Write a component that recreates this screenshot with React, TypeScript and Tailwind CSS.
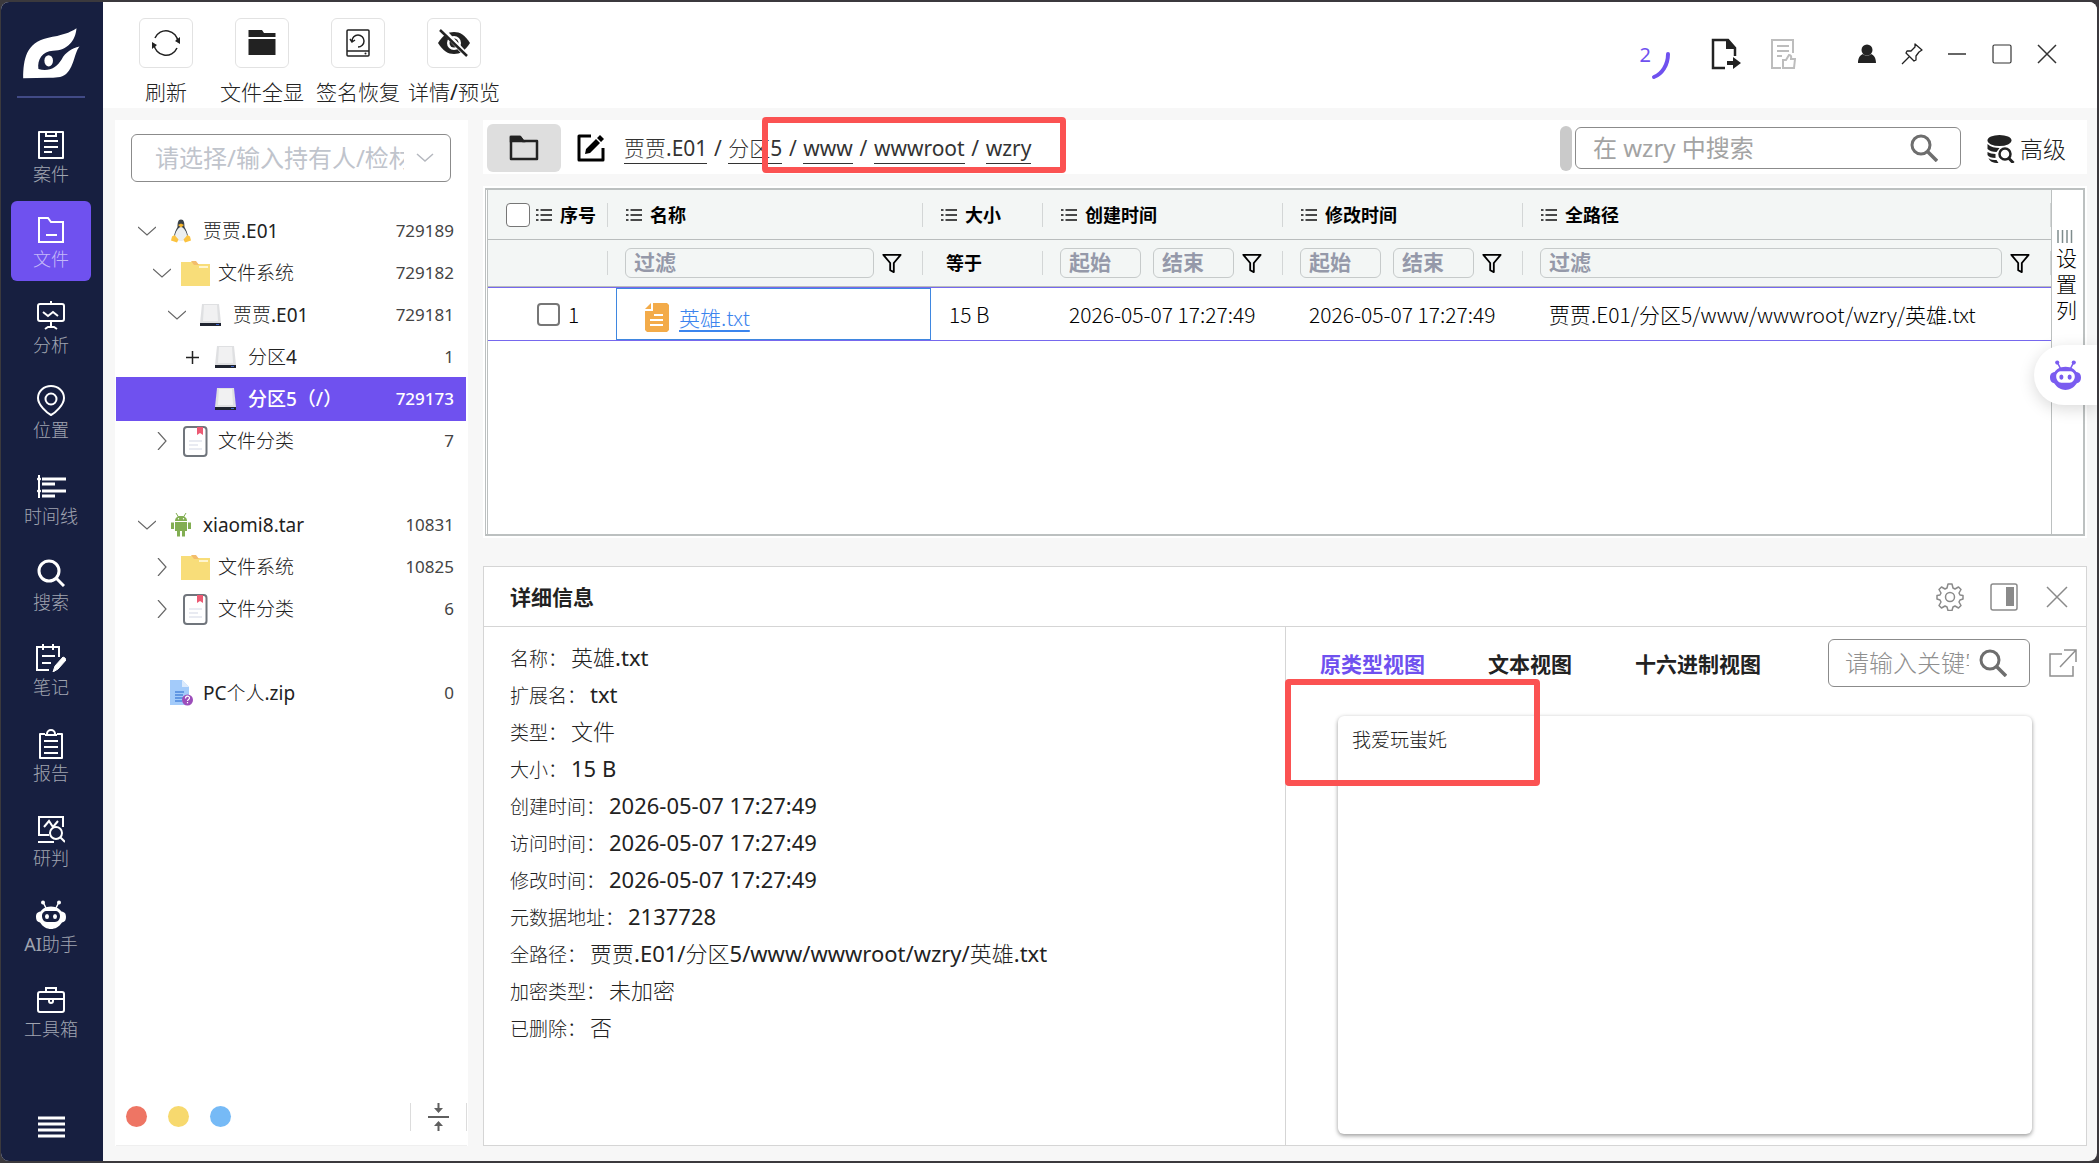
import { useState, type ReactNode } from 'react';
import clsx from 'clsx';

type IconProps = { className?: string };

const stroke = { fill: 'none', stroke: 'currentColor', strokeWidth: 2 } as const;

/* ---------- sidebar icons ---------- */

const LogoIcon = () => (
  <svg viewBox="66 80 180 160" className="w-[60px] h-[53px] text-white" fill="currentColor">
    <path d="M72 235C72 175 82 128 145 113C190 105 212 98 233 84C230 122 206 151 162 152C130 154 114 178 118 207C150 216 172 203 188 178C200 156 218 145 242 139C224 160 226 214 190 229C178 234 165 233 150 233Z" />
    <ellipse cx="149" cy="182" rx="13" ry="17" />
  </svg>
);

const CaseIcon = () => (
  <svg viewBox="0 0 28 30" className="w-7 h-[30px]" {...stroke}>
    <path d="M9 2H2v26h24V2h-7" strokeLinejoin="round" />
    <path d="M9 1v5h10V1M2 2h24M7 11h14M7 17h14M7 22h8" />
  </svg>
);

const FileNavIcon = () => (
  <svg viewBox="0 0 28 30" className="w-7 h-[30px]" {...stroke}>
    <path d="M2 3h9l3 4h12v20H2zM9 20h11" />
  </svg>
);

const AnalysisIcon = () => (
  <svg viewBox="0 0 30 30" className="w-[30px] h-[30px]" {...stroke}>
    <rect x="2" y="3" width="26" height="17" rx="2" />
    <path d="M15 0v3M7 11l5 4 5-4 5 4M15 20v6M9 28l3-2h6l3 2" />
  </svg>
);

const LocationIcon = () => (
  <svg viewBox="0 0 30 32" className="w-[30px] h-8" {...stroke}>
    <path d="M15 30C11 28 2 20 2 13a13 12 0 0 1 26 0c0 7-9 15-13 17z" />
    <circle cx="15" cy="14" r="5.500" />
  </svg>
);

const TimelineIcon = () => (
  <svg viewBox="0 0 30 26" className="w-[30px] h-[26px]" fill="none" stroke="currentColor" strokeWidth="3">
    <path d="M3 1v23" strokeWidth="2" />
    <path d="M6 5h24M6 10h13M6 17h24M6 22h13" />
    <circle cx="3" cy="5" r="1.500" fill="currentColor" strokeWidth="1" />
    <circle cx="3" cy="17" r="1.500" fill="currentColor" strokeWidth="1" />
  </svg>
);

const SearchNavIcon = () => (
  <svg viewBox="0 0 28 28" className="w-7 h-7" fill="none" stroke="currentColor" strokeWidth="3">
    <circle cx="12" cy="12" r="10" />
    <path d="M19 19l8 8" />
  </svg>
);

const NoteIcon = () => (
  <svg viewBox="0 0 30 28" className="w-[30px] h-7" {...stroke}>
    <path d="M13 26H1V3h22v10M7 0v6M17 0v6M6 12h13M6 19h9" />
    <path d="M29 14l-2-1-8 9-2 6 5-3 8-9z" fill="currentColor" strokeWidth="1" />
  </svg>
);

const ReportIcon = () => (
  <svg viewBox="0 0 28 30" className="w-7 h-[30px]" {...stroke}>
    <path d="M8 5H3v24h22V5h-5" strokeLinejoin="round" />
    <path d="M8 6h12M10 5a4 4 0 0 1 8 0M7 12h14M7 18h14M7 24h14" />
  </svg>
);

const JudgeIcon = () => (
  <svg viewBox="0 0 28 28" className="w-7 h-7" {...stroke}>
    <path d="M12 20H2V2h24v10M7 12l5-6 4 6 5-6M1 27h16" />
    <circle cx="19" cy="18" r="6" fill="#171f40" />
    <path d="M23 22l5 5" />
  </svg>
);

const RobotIcon = ({ className }: IconProps) => (
  <svg viewBox="0 0 30 30" className={className}>
    <path d="M7 2l3 6M23 2l-3 6" stroke="currentColor" strokeWidth="1.500" fill="none" />
    <circle cx="7" cy="2.500" r="2" fill="currentColor" />
    <circle cx="23" cy="2.500" r="2" fill="currentColor" />
    <path
      fill="currentColor"
      fillRule="evenodd"
      d="M15 6.500c6 0 9 3 10.500 5C29 12 30 14 30 17s-1 5-4 5.500C23 27 19 29 15 29S7 27 4 22.500C1 22 0 20 0 17s1-5 4.500-5.500C6 9.500 9 6.500 15 6.500zM11 11c-3 0-5 2-5 5s2 6 5 6h8c3 0 5-3 5-6s-2-5-5-5z"
    />
    <ellipse cx="11" cy="16.500" rx="2" ry="2.500" fill="currentColor" />
    <ellipse cx="19" cy="16.500" rx="2" ry="2.500" fill="currentColor" />
  </svg>
);

const ToolboxIcon = () => (
  <svg viewBox="0 0 28 28" className="w-7 h-7" {...stroke}>
    <rect x="1" y="6" width="26" height="20" rx="2" />
    <path d="M9 6V2h10v4M1 13h26M12 13v2a2 2 0 0 0 4 0v-2" />
  </svg>
);

/* ---------- toolbar icons ---------- */

const RefreshIcon = () => (
  <svg viewBox="0 0 28 28" className="w-7 h-7" fill="none" stroke="#222" strokeWidth="1.500">
    <path d="M3 9a12 12 0 0 1 23 4M25 19a12 12 0 0 1-23-4" />
    <path d="M28 8v7l-5-3zM0 20v-7l5 3z" fill="#222" stroke="none" />
  </svg>
);

const FolderSolidIcon = () => (
  <svg viewBox="0 0 28 26" className="w-7 h-[26px]" fill="#222">
    <path d="M.5 0H14l2 3h11.500v4H.5zM.5 9h27v16H.5z" />
  </svg>
);

const RestoreDiskIcon = () => (
  <svg viewBox="0 0 24 28" className="w-6 h-7" fill="none" stroke="#222" strokeWidth="1.500">
    <rect x="1" y="1" width="22" height="26" rx="1" />
    <path d="M1 22h22M6 12a6 6 0 1 1 6 6M4 10l2 3 3-2" />
    <circle cx="19.500" cy="24.500" r="1" fill="#222" stroke="none" />
  </svg>
);

const EyeOffIcon = () => (
  <svg viewBox="0 0 34 28" className="w-[34px] h-7">
    <path d="M1 14C6 6 11 3 17 3s11 3 16 11c-5 8-10 11-16 11S6 22 1 14z" fill="#222" />
    <circle cx="17" cy="14" r="7" fill="#fff" />
    <circle cx="17" cy="14" r="4.500" fill="#222" />
    <path d="M5 0l25 27" stroke="#fff" strokeWidth="5" />
    <path d="M3 1l27 26" stroke="#222" strokeWidth="2.500" />
  </svg>
);

const ExportIcon = () => (
  <svg viewBox="0 0 30 32" className="w-[30px] h-8">
    <path d="M14 30H2V2h15l7 8v8" fill="none" stroke="#222" strokeWidth="2.500" />
    <path d="M15 1l10 10H15zM16 23h6v-4l8 6-8 6v-4h-6z" fill="#222" />
  </svg>
);

const ApproveIcon = () => (
  <svg viewBox="0 0 26 32" className="w-[26px] h-8" fill="none" stroke="#bdbdbd" strokeWidth="2">
    <path d="M11 30H2V2h21v13M7 8h12M7 13h12M7 18h5" />
    <path d="M13 22h3l3-5c3 0 2 3 2 4h4l-1 9H13z" />
  </svg>
);

const FunnelIcon = () => (
  <svg viewBox="0 0 22 22" className="w-5 h-5" fill="none" stroke="#000" strokeWidth="2">
    <path d="M1.500 2h19L13 11v10l-4-2v-8z" strokeLinejoin="round" />
  </svg>
);

const ListIcon = () => (
  <svg viewBox="0 0 16 14" className="w-4 h-[14px] shrink-0" stroke="#111" strokeWidth="1.500">
    <path d="M0 2h2.500M4.500 2H16M0 7h2.500M4.500 7H16M0 12h2.500M4.500 12H16" />
  </svg>
);

const MagnifierIcon = () => (
  <svg viewBox="0 0 28 28" className="w-7 h-7" fill="none" stroke="#6e6e6e" strokeWidth="3">
    <circle cx="11" cy="11" r="9" />
    <path d="M17 17l10 10" strokeWidth="3.500" />
  </svg>
);

const DatabaseSearchIcon = () => (
  <svg viewBox="0 0 27 28" className="w-7 h-7" fill="#222">
    <ellipse cx="12" cy="5.500" rx="12" ry="5.500" />
    <path d="M0 9c3 3 8 4 12 4l-3 4C5 17 2 16 0 14zM0 17c2 1 5 2 8 2v4c-4 0-7-1-8-3zM1 23c2 2 5 2 8 2l2 3c-6 0-9-2-10-5z" />
    <circle cx="17.500" cy="19" r="5.500" fill="#fff" stroke="#222" strokeWidth="2.500" />
    <path d="M21 23l5 5" stroke="#222" strokeWidth="3" />
  </svg>
);

/* ---------- tree icons ---------- */

const Chevron = ({ open }: { open: boolean }) => (
  <svg viewBox="0 0 18 18" className="w-[18px] h-[18px]" fill="none" stroke="#666" strokeWidth="1.200">
    <path d={open ? 'M0 5l9 8 9-8' : 'M5 0l8 9-8 9'} />
  </svg>
);

const LinuxIcon = () => (
  <svg viewBox="0 0 20 24" className="w-5 h-6">
    <path d="M10 0.500C7 .5 6.500 4 6.500 8 5 11 3 14 3 19c4 3 10 3 14 0 0-5-2-8-3.500-11C13.500 4 13 .5 10 .5z" fill="#3b4248" />
    <path d="M10 8c-3 0-6 6-6 9s3 5 6 5 6-2 6-5-3-9-6-9z" fill="#eceff1" />
    <path d="M7 6l3 2.500L13 6l-3-1.500z" fill="#f6b62c" />
    <path d="M3.500 16l4 4.500-1.500 3-6-2 1-4zM16.500 16l-4 4.500 1.500 3 6-2-1-4z" fill="#fbc340" />
  </svg>
);

const AndroidIcon = () => (
  <svg viewBox="0 0 20 24" className="w-5 h-6" fill="#82ae52">
    <path d="M4 8C4 5 6 3 10 3s6 2 6 5z" />
    <path d="M5 0l2.500 4M15 0l-2.500 4" stroke="#82ae52" />
    <path d="M4 9h12v9H4zM0 9.500h3V16H0zM17 9.500h3V16h-3zM6 18h3v5.500H6zM11 18h3v5.500h-3z" />
    <circle cx="7.500" cy="5.800" r=".7" fill="#fff" />
    <circle cx="12.500" cy="5.800" r=".7" fill="#fff" />
  </svg>
);

const FolderIcon = () => (
  <svg viewBox="0 0 29 25" className="w-[29px] h-[25px]">
    <path d="M0 1h14l3 2h12v22H0z" fill="#f8dd79" />
    <path d="M10 0h5l3 4h-5z" fill="#f3bd6c" />
    <path d="M18 6h9" stroke="#fff5cf" strokeWidth="2" />
  </svg>
);

const DiskIcon = () => (
  <svg viewBox="0 0 21 24" className="w-[21px] h-6">
    <path d="M2 1h17l2 19H0z" fill="#dfe0e2" />
    <path d="M4 2h13l1 16H3z" fill="#f1f1f2" />
    <path d="M0 20h21v3H0z" fill="#1f2430" />
    <path d="M16 21.500h3" stroke="#3f64c8" />
  </svg>
);

const CategoryIcon = () => (
  <svg viewBox="0 0 25 31" className="w-[25px] h-[31px]">
    <rect x="1" y="1" width="22.500" height="29" rx="3" fill="#fff" stroke="#70757c" strokeWidth="2" />
    <path d="M14 1h6v8l-3-2-3 2z" fill="#ec5a73" />
    <path d="M6 15h13M6 19h9M6 23h13" stroke="#e2e5ee" strokeWidth="1.500" />
  </svg>
);

const UnknownFileIcon = () => (
  <svg viewBox="0 0 24 26" className="w-6 h-[26px]">
    <path d="M1 0h12l7 7v18H1z" fill="#a3cbfa" />
    <path d="M13 0l7 7h-7z" fill="#dcebfd" />
    <path d="M6 12h9M6 15h8M6 18h9M6 21h7" stroke="#4c86dc" strokeWidth="1.500" />
    <circle cx="18.500" cy="20" r="5.500" fill="#9c4dba" />
    <path d="M16.500 18.500c0-3 4-3 4-.5 0 1.500-2 1.500-2 3M18.500 22v1.200" stroke="#fff" fill="none" strokeWidth="1.200" />
  </svg>
);

const TxtIcon = () => (
  <svg viewBox="0 0 24 29" className="w-6 h-[29px] shrink-0">
    <path d="M8 0h14l2 2v25l-2 2H2l-2-2V8h8z" fill="#f3ab49" />
    <path d="M6 0v6H0z" fill="#f3ab49" />
    <path d="M9 12h9M5 17h13M5 22h13" stroke="#fff" strokeWidth="1.800" />
  </svg>
);

/* ---------- data ---------- */

const NAV: { label: string; icon: ReactNode }[] = [
  { label: '案件', icon: <CaseIcon /> },
  { label: '文件', icon: <FileNavIcon /> },
  { label: '分析', icon: <AnalysisIcon /> },
  { label: '位置', icon: <LocationIcon /> },
  { label: '时间线', icon: <TimelineIcon /> },
  { label: '搜索', icon: <SearchNavIcon /> },
  { label: '笔记', icon: <NoteIcon /> },
  { label: '报告', icon: <ReportIcon /> },
  { label: '研判', icon: <JudgeIcon /> },
  { label: 'AI助手', icon: <RobotIcon className="w-[30px] h-[30px]" /> },
  { label: '工具箱', icon: <ToolboxIcon /> },
];

const ACTIONS: { label: string; icon: ReactNode }[] = [
  { label: '刷新', icon: <RefreshIcon /> },
  { label: '文件全显', icon: <FolderSolidIcon /> },
  { label: '签名恢复', icon: <RestoreDiskIcon /> },
  { label: '详情/预览', icon: <EyeOffIcon /> },
];

type TreeNode = {
  label: string;
  count: number;
  indent: string;
  icon: ReactNode;
  toggle: 'open' | 'closed' | 'plus' | 'none';
  selected?: boolean;
  spaced?: boolean;
};

const TREE: TreeNode[] = [
  { label: '贾贾.E01', count: 729189, indent: 'pl-[21px]', icon: <LinuxIcon />, toggle: 'open' },
  { label: '文件系统', count: 729182, indent: 'pl-9', icon: <FolderIcon />, toggle: 'open' },
  { label: '贾贾.E01', count: 729181, indent: 'pl-[51px]', icon: <DiskIcon />, toggle: 'open' },
  { label: '分区4', count: 1, indent: 'pl-[66px]', icon: <DiskIcon />, toggle: 'plus' },
  { label: '分区5（/）', count: 729173, indent: 'pl-[66px]', icon: <DiskIcon />, toggle: 'none', selected: true },
  { label: '文件分类', count: 7, indent: 'pl-9', icon: <CategoryIcon />, toggle: 'closed' },
  { label: 'xiaomi8.tar', count: 10831, indent: 'pl-[21px]', icon: <AndroidIcon />, toggle: 'open', spaced: true },
  { label: '文件系统', count: 10825, indent: 'pl-9', icon: <FolderIcon />, toggle: 'closed' },
  { label: '文件分类', count: 6, indent: 'pl-9', icon: <CategoryIcon />, toggle: 'closed' },
  { label: 'PC个人.zip', count: 0, indent: 'pl-[21px]', icon: <UnknownFileIcon />, toggle: 'none', spaced: true },
];

const CRUMBS = ['贾贾.E01', '分区5', 'www', 'wwwroot', 'wzry'];

const DETAILS = [
  ['名称', '英雄.txt'],
  ['扩展名', 'txt'],
  ['类型', '文件'],
  ['大小', '15 B'],
  ['创建时间', '2026-05-07 17:27:49'],
  ['访问时间', '2026-05-07 17:27:49'],
  ['修改时间', '2026-05-07 17:27:49'],
  ['元数据地址', '2137728'],
  ['全路径', '贾贾.E01/分区5/www/wwwroot/wzry/英雄.txt'],
  ['加密类型', '未加密'],
  ['已删除', '否'],
];

const TABS = ['原类型视图', '文本视图', '十六进制视图'];

// Han runs are set in the light cut, latin and digits stay regular
function Mixed({ text }: { text: string }) {
  return (
    <>
      {text.split(/(\p{Script=Han}+)/u).map((part, i) =>
        i % 2 ? <span key={i} className="font-light">{part}</span> : part,
      )}
    </>
  );
}

/* ---------- panels ---------- */

function Sidebar() {
  const [active, setActive] = useState('文件');
  return (
    <aside className="w-[102px] shrink-0 bg-[#171f40] flex flex-col pr-[2px]">
      <div className="h-[111px] flex flex-col items-center pt-[25px]">
        <LogoIcon />
        <div className="mt-4 w-[68px] h-[2px] bg-[#414a86]" />
      </div>
      <nav className="flex-1 flex flex-col">
        {NAV.map((item) => (
          <div key={item.label} className="flex-1 flex items-center justify-center">
            <button
              type="button"
              onClick={() => setActive(item.label)}
              className={clsx(
                'w-20 h-20 rounded-md flex flex-col items-center pt-[13px] text-white',
                item.label === active && 'bg-[#6f51ef]',
              )}
            >
              <span className="h-8 flex items-center">{item.icon}</span>
              <span className="text-lg leading-[26px] text-white/60"><Mixed text={item.label} /></span>
            </button>
          </div>
        ))}
      </nav>
      <button type="button" aria-label="菜单" className="h-[107px] flex justify-center pt-[62px] text-white">
        <svg viewBox="0 0 27 22" className="w-[27px] h-[22px]" stroke="currentColor" strokeWidth="3">
          <path d="M0 2h27M0 8h27M0 14h27M0 20h27" />
        </svg>
      </button>
    </aside>
  );
}

function TopBar() {
  return (
    <header className="h-[106px] shrink-0 bg-white flex justify-between">
      <div className="flex pl-[15px] pt-4">
        {ACTIONS.map((a) => (
          <button key={a.label} type="button" className="w-24 flex flex-col items-center text-[#222]">
            <span className="w-[54px] h-[54px] rounded-md border border-[#e2e2e2] flex items-center justify-center">
              {a.icon}
            </span>
            <span className="mt-2 text-[21px] leading-8 whitespace-nowrap"><Mixed text={a.label} /></span>
          </button>
        ))}
      </div>
      <div className="flex items-center h-[104px] pr-10">
        <div className="flex text-[#6f51ef] mt-4 mr-10">
          <span className="text-xl leading-6">2</span>
          <svg viewBox="0 0 20 30" className="w-5 h-[30px] mt-2" fill="none" stroke="currentColor" strokeWidth="4">
            <path d="M17 3C17 14 11 23 3 26" strokeLinecap="round" />
          </svg>
        </div>
        <button type="button" aria-label="导出" className="mr-[29px]"><ExportIcon /></button>
        <button type="button" aria-label="审批" className="mr-[62px]"><ApproveIcon /></button>
        <button type="button" aria-label="用户" className="mr-[25px]">
          <svg viewBox="0 0 18 20" className="w-[18px] h-5" fill="#222">
            <circle cx="9" cy="6" r="5.500" />
            <path d="M0 19c0-5 2-8 5-9 2 2 6 2 8 0 3 1 5 4 5 9z" />
          </svg>
        </button>
        <button type="button" aria-label="置顶" className="mr-6">
          <svg viewBox="0 0 22 22" className="w-[22px] h-[22px]" fill="none" stroke="#222" strokeWidth="1.300">
            <path d="M14 1l7 6-3 2-3 4v4l-2 1-8-8 1-2h4l4-4zM8 14l-7 7" strokeLinejoin="round" />
          </svg>
        </button>
        <button type="button" aria-label="最小化" className="mr-[25px]">
          <svg viewBox="0 0 20 20" className="w-5 h-5" stroke="#333" strokeWidth="1.500"><path d="M1 10h18" /></svg>
        </button>
        <button type="button" aria-label="最大化" className="mr-[25px]">
          <svg viewBox="0 0 20 20" className="w-5 h-5" fill="none" stroke="#333" strokeWidth="1.200">
            <rect x="1" y="1" width="18" height="18" rx="1.500" />
          </svg>
        </button>
        <button type="button" aria-label="关闭">
          <svg viewBox="0 0 20 20" className="w-5 h-5" stroke="#333" strokeWidth="1.500"><path d="M1 1l18 18M19 1L1 19" /></svg>
        </button>
      </div>
    </header>
  );
}

function EvidenceTree() {
  return (
    <section className="w-[353px] shrink-0 bg-white flex flex-col">
      <div className="ml-4 mr-[17px] mt-[14px] h-12 rounded-md border border-[#8b8b8b] flex items-center pl-[23px] pr-4">
        <input
          aria-label="持有人/检材"
          placeholder="请选择/输入持有人/检材"
          className="flex-1 min-w-0 text-2xl outline-none placeholder:text-[#c0c4cc]"
        />
        <button type="button" aria-label="展开" className="ml-3 text-[#b5b8bf]">
          <svg viewBox="0 0 18 18" className="w-[18px] h-[18px]" fill="none" stroke="currentColor" strokeWidth="1.500">
            <path d="M1 5l8 7 8-7" />
          </svg>
        </button>
      </div>
      <ul className="mt-7 flex-1 pl-px pr-[2px]">
        {TREE.map((n, i) => (
          <li key={i} className={clsx(n.spaced && 'mt-[42px]')}>
            <button
              type="button"
              className={clsx(
                'w-full flex items-center pr-3',
                n.indent,
                n.selected ? 'h-11 -my-px bg-[#6f51ef] text-white font-medium' : 'h-[42px] text-[#222]',
              )}
            >
              <span className="w-5 flex justify-center shrink-0">
                {n.toggle === 'open' && <Chevron open />}
                {n.toggle === 'closed' && <Chevron open={false} />}
                {n.toggle === 'plus' && (
                  <svg viewBox="0 0 13 13" className="w-[13px] h-[13px]" stroke="#222" strokeWidth="1.500">
                    <path d="M0 6.500h13M6.500 0v13" />
                  </svg>
                )}
              </span>
              <span className="ml-2 w-[31px] flex justify-center shrink-0">{n.icon}</span>
              <span className="ml-[7px] text-[19px] leading-7">
                {n.selected ? n.label : <Mixed text={n.label} />}
              </span>
              <span className={clsx('ml-auto text-[17px] leading-7', !n.selected && 'text-[#444]')}>{n.count}</span>
            </button>
          </li>
        ))}
      </ul>
      <div className="mx-px h-[57px] border-b border-[#efefef] flex items-start justify-between">
        <div className="flex gap-[21px] pl-[10px] pt-[17px]">
          <span className="w-[21px] h-[21px] rounded-full bg-[#ee7564]" />
          <span className="w-[21px] h-[21px] rounded-full bg-[#f7d96e]" />
          <span className="w-[21px] h-[21px] rounded-full bg-[#76baf6]" />
        </div>
        <button type="button" aria-label="折叠" className="mt-[14px] w-[57px] h-7 border-x border-[#dcdcdc] flex justify-center">
          <svg viewBox="0 0 21 28" className="w-[21px] h-7" fill="#5f5f5f">
            <path d="M0 13h21v2H0zM9.500 0h2v5H15l-4.500 5L6 5h3.500zM9.500 28h2v-5H15l-4.500-5L6 23h3.500z" />
          </svg>
        </button>
      </div>
    </section>
  );
}

function PathBar() {
  return (
    <div className="relative h-[54px] shrink-0 bg-white flex items-center pt-[2px] pl-1 pr-[21px]">
      <button type="button" aria-label="目录" className="w-[74px] h-12 rounded-md bg-[#dedede] flex items-center justify-center">
        <svg viewBox="0 0 30 26" className="w-[30px] h-[26px]" fill="none" stroke="#222" strokeWidth="2.500">
          <path d="M2 2h9l3 4h14v18H2z" strokeLinejoin="round" />
          <path d="M2 2h9l3 4H2z" fill="#222" />
        </svg>
      </button>
      <button type="button" aria-label="编辑路径" className="ml-4">
        <svg viewBox="0 0 28 28" className="w-7 h-7" fill="none" stroke="#000" strokeWidth="3">
          <path d="M14 2H2v24h24V14" strokeLinejoin="round" />
          <path d="M8 20l1-5L19 5l4 4-10 10zM20 4l3-3 4 4-3 3z" fill="#000" stroke="none" />
        </svg>
      </button>
      <nav className="ml-[19px] flex text-[21px] leading-[30px] text-[#333]">
        {CRUMBS.map((c, i) => (
          <span key={c} className="flex">
            {i > 0 && <span className="w-[21px] text-center">/</span>}
            <a href="#" className="border-b border-[#333]"><Mixed text={c} /></a>
          </span>
        ))}
      </nav>
      <div className="ml-auto w-3 h-[45px] rounded-full bg-[#cacaca]" />
      <div className="ml-[3px] w-[386px] h-[42px] rounded-md border border-[#8b8b8b] flex items-center pl-[17px] pr-[22px]">
        <input
          aria-label="在 wzry 中搜索"
          placeholder="在 wzry 中搜索"
          className="flex-1 min-w-0 text-2xl outline-none placeholder:text-[#a3a3a3]"
        />
        <button type="button" aria-label="搜索"><MagnifierIcon /></button>
      </div>
      <button type="button" className="ml-[26px] flex items-center gap-[5px] pt-[2px] text-[23px] font-light text-[#222]">
        <DatabaseSearchIcon />
        高级
      </button>
      {/* highlight around the inner folders */}
      <div className="absolute left-[279px] -top-[3px] w-[304px] h-14 border-[6px] border-[#fb5252] rounded-sm pointer-events-none" />
    </div>
  );
}

function HeadCell({ title, lead }: { title: string; lead?: ReactNode }) {
  return (
    <th scope="col" className="p-0 h-[50px] border-b border-[#b9bdbd]">
      <div className="h-6 border-r border-[#d3d6d6] flex items-center gap-2 pl-[18px]">
        {lead}
        <ListIcon />
        <span className="text-lg leading-6 font-bold">{title}</span>
      </div>
    </th>
  );
}

function FilterCell({ children }: { children?: ReactNode }) {
  return (
    <td className="p-0 h-[47px] border-b border-[#b9bdbd]">
      <div className="h-6 border-r border-[#d3d6d6] flex items-center pl-[17px]">{children}</div>
    </td>
  );
}

const filterInput =
  'h-[30px] px-2 rounded-md border border-[#c6caca] bg-transparent text-[21px] font-bold outline-none placeholder:font-bold placeholder:text-[#9599a9]';

function DateFilter({ name }: { name: string }) {
  return (
    <>
      <input aria-label={`${name}起始`} placeholder="起始" className={clsx(filterInput, 'w-[81px] mr-3')} />
      <input aria-label={`${name}结束`} placeholder="结束" className={clsx(filterInput, 'w-[81px] mr-2')} />
      <button type="button" aria-label={`筛选${name}`}><FunnelIcon /></button>
    </>
  );
}

function FileTable() {
  return (
    <div className="h-[352px] shrink-0 bg-white p-[2px]">
      <div className="h-full border-2 border-l border-[#bcc0c0] pl-px flex">
        <div className="flex-1 min-w-0 border-l border-[#bcc0c0]">
          <table className="w-full table-fixed border-separate border-spacing-0 text-left text-black">
            <colgroup>
              <col className="w-[120px]" />
              <col className="w-[315px]" />
              <col className="w-[120px]" />
              <col className="w-[240px]" />
              <col className="w-[240px]" />
              <col />
            </colgroup>
            <thead className="bg-[#f3f6f5]">
              <tr>
                <HeadCell
                  title="序号"
                  lead={
                    <input
                      type="checkbox"
                      aria-label="全选"
                      className="-mr-[2px] w-6 h-6 shrink-0 appearance-none rounded border border-[#767676] bg-white"
                    />
                  }
                />
                <HeadCell title="名称" />
                <HeadCell title="大小" />
                <HeadCell title="创建时间" />
                <HeadCell title="修改时间" />
                <HeadCell title="全路径" />
              </tr>
              <tr>
                <FilterCell />
                <FilterCell>
                  <input aria-label="过滤名称" placeholder="过滤" className={clsx(filterInput, 'flex-1 min-w-0 mr-2')} />
                  <button type="button" aria-label="筛选名称" className="mr-5"><FunnelIcon /></button>
                </FilterCell>
                <FilterCell>
                  <span className="pl-[6px] text-lg leading-6 font-bold">等于</span>
                </FilterCell>
                <FilterCell><DateFilter name="创建时间" /></FilterCell>
                <FilterCell><DateFilter name="修改时间" /></FilterCell>
                <FilterCell>
                  <input aria-label="过滤全路径" placeholder="过滤" className={clsx(filterInput, 'flex-1 min-w-0 mr-2')} />
                  <button type="button" aria-label="筛选全路径" className="mr-5"><FunnelIcon /></button>
                </FilterCell>
              </tr>
            </thead>
            <tbody className="text-[21px] leading-7 font-light font-['Noto_Sans_CJK_SC',sans-serif]">
              <tr className="h-[54px] *:p-0 *:border-y *:border-[#7668ee] whitespace-nowrap">
                <td>
                  <label className="flex items-center gap-2 pl-[49px]">
                    <input type="checkbox" className="w-[23px] h-[23px] appearance-none rounded-sm border-2 border-[#767676] bg-white" />
                    1
                  </label>
                </td>
                <td>
                  <div className="ml-2 -mr-2 h-[52px] border border-[#3f87e0] flex items-center pl-7 pt-[6px]">
                    <TxtIcon />
                    <a href="#" className="ml-[10px] text-[#3b84ee] underline underline-offset-4">英雄.txt</a>
                  </div>
                </td>
                <td><span className="pl-[26px]">15 B</span></td>
                <td><span className="pl-[26px]">2026-05-07 17:27:49</span></td>
                <td><span className="pl-[26px]">2026-05-07 17:27:49</span></td>
                <td><span className="pl-[26px]">贾贾.E01/分区5/www/wwwroot/wzry/英雄.txt</span></td>
              </tr>
            </tbody>
          </table>
        </div>
        <button type="button" className="w-8 border-l border-[#bcc0c0] flex flex-col items-center pt-10 pr-[2px] text-[21px] leading-[26px] font-light text-black">
          <svg viewBox="0 0 16 13" className="w-4 h-[13px] mb-[2px] mr-1" stroke="#7f8c8d" strokeWidth="1.500">
            <path d="M1 0v13M5.500 0v13M10 0v13M14.500 0v13" />
          </svg>
          <span>设</span>
          <span>置</span>
          <span>列</span>
        </button>
      </div>
    </div>
  );
}

function Preview() {
  const [tab, setTab] = useState(TABS[0]);
  return (
    <div className="relative w-[801px] shrink-0 border-l border-[#d5d5d5] flex flex-col">
      <div className="flex items-center pl-[34px] pr-[9px] pt-3">
        <div className="flex gap-[63px] pt-[2px] text-[21px] leading-8 font-bold">
          {TABS.map((t) => (
            <button
              key={t}
              type="button"
              onClick={() => setTab(t)}
              className={t === tab ? 'text-[#6f51ef]' : 'text-[#222]'}
            >
              {t}
            </button>
          ))}
        </div>
        <div className="ml-auto w-[202px] h-12 rounded-md border border-[#8b8b8b] flex items-center pl-4 pr-[22px]">
          <input
            aria-label="关键字"
            placeholder="请输入关键字"
            className="flex-1 min-w-0 mr-[10px] text-2xl font-light outline-none placeholder:text-[#8f8f8f]"
          />
          <button type="button" aria-label="查找"><MagnifierIcon /></button>
        </div>
        <button type="button" aria-label="新窗口打开" className="ml-[19px]">
          <svg viewBox="0 0 28 28" className="w-7 h-7" fill="none" stroke="#8f8f8f" strokeWidth="1.500">
            <path d="M13 5H1v22h23V17M15 1h12v12M27 1L11 18" />
          </svg>
        </button>
      </div>
      <div className="flex-1 ml-[52px] mr-[54px] mt-[29px] mb-[11px] rounded-md bg-white shadow-[0_2px_4px_rgba(0,0,0,0.35),0_0_4px_rgba(0,0,0,0.08)] px-[14px] py-3">
        <p className="text-[19px] leading-6 font-light text-[#222]">我爱玩蚩奼</p>
      </div>
      {/* highlight around the file text */}
      <div className="absolute -left-px top-[52px] w-[255px] h-[107px] border-[6px] border-[#fb5252] rounded-sm pointer-events-none" />
    </div>
  );
}

function DetailsPanel() {
  return (
    <section className="mt-7 flex-1 min-h-0 bg-white border border-[#d5d5d5] flex flex-col">
      <div className="h-[60px] shrink-0 border-b border-[#d5d5d5] flex items-center pl-[26px] pr-[18px]">
        <h2 className="text-[21px] leading-8 font-bold text-[#222]">详细信息</h2>
        <div className="ml-auto flex items-center gap-[26px]">
          <button type="button" aria-label="设置">
            <svg viewBox="0 0 28 28" className="w-7 h-7" fill="none" stroke="#8a8a8a" strokeWidth="1.500">
              <path
                strokeLinejoin="round"
                d="M12 1h4l1 4 2 1 3.500-2 2.500 2.500L23 10l1 2 3 .500v3.500l-3 1-1 2 2 3.500-2.500 2.500-3.500-2-2 1-1 3.500h-4l-1-3.500-2-1-3.500 2L3 22.500 5 19l-1-2-3-1v-3.500L4 12l1-2-2-3.500L5.500 4 9 6l2-1z"
              />
              <circle cx="14" cy="14" r="4.500" />
            </svg>
          </button>
          <button type="button" aria-label="布局">
            <svg viewBox="0 0 28 28" className="w-7 h-7" fill="none" stroke="#8a8a8a" strokeWidth="1.500">
              <rect x="1" y="1" width="26" height="26" rx="2" />
              <path d="M16 4h8v19h-8z" fill="#8a8a8a" stroke="none" />
            </svg>
          </button>
          <button type="button" aria-label="关闭详情" className="ml-[2px]">
            <svg viewBox="0 0 22 22" className="w-[22px] h-[22px]" stroke="#8a8a8a" strokeWidth="1.500">
              <path d="M1 1l20 20M21 1L1 21" />
            </svg>
          </button>
        </div>
      </div>
      <div className="flex-1 min-h-0 flex">
        <dl className="flex-1 min-w-0 pl-[26px] pt-3 text-[#222]">
          {DETAILS.map(([k, v]) => (
            <div key={k} className="h-[37px] flex items-baseline gap-1 leading-9">
              <dt className="text-[19px] font-light">{k}：</dt>
              <dd className="text-[22px]"><Mixed text={v} /></dd>
            </div>
          ))}
        </dl>
        <Preview />
      </div>
    </section>
  );
}

export default function App() {
  return (
    <div className="h-screen bg-[#3b393d] px-px py-[2px] font-['Noto_Sans','Noto_Sans_CJK_SC',sans-serif]">
      <div className="relative h-full mr-px rounded-lg overflow-hidden bg-[#f7f7f7] flex">
        <Sidebar />
        <div className="flex-1 min-w-0 flex flex-col">
          <TopBar />
          <main className="flex-1 min-h-0 flex gap-[15px] pl-3 pr-[10px] pt-3 pb-[15px]">
            <EvidenceTree />
            <div className="flex-1 min-w-0 flex flex-col">
              <PathBar />
              <div className="mt-3">
                <FileTable />
              </div>
              <DetailsPanel />
            </div>
          </main>
        </div>
        <button
          type="button"
          aria-label="AI助手"
          className="absolute right-0 top-[343px] w-[63px] h-[60px] rounded-l-full bg-white shadow-[0_4px_16px_rgba(0,0,0,0.15)] flex items-center justify-center text-[#7a5cf0]"
        >
          <RobotIcon className="w-[31px] h-[31px]" />
        </button>
      </div>
    </div>
  );
}
